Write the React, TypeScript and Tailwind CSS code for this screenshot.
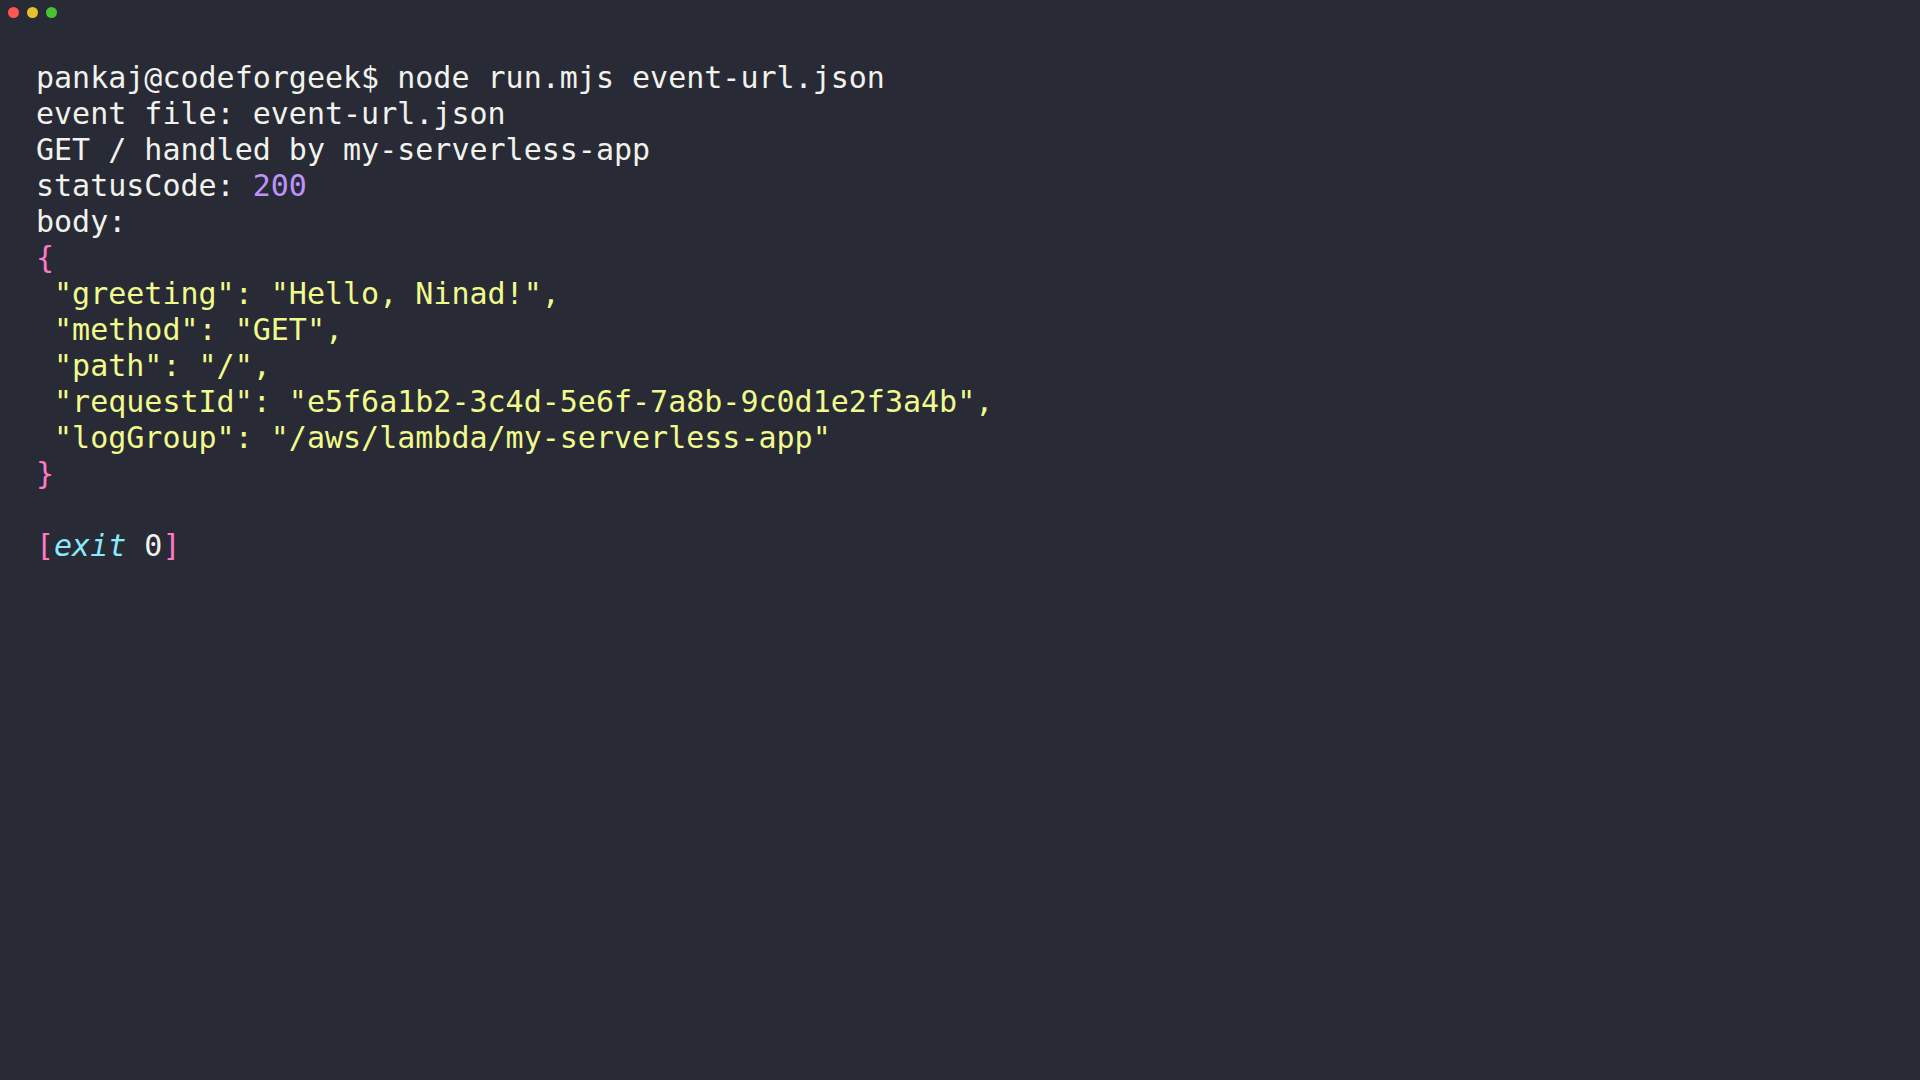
export default function App() {
  const yellow = "text-[#f1fa8c]";
  return (
    <div className="min-h-screen w-full bg-[#282a36] text-[#f2f2ec]">
      <div className="flex items-center gap-2 px-[8px] pt-[7px]">
        <span className="h-[11px] w-[11px] rounded-full bg-[#ff5555]" />
        <span className="h-[11px] w-[11px] rounded-full bg-[#e9c02c]" />
        <span className="h-[11px] w-[11px] rounded-full bg-[#4cc232]" />
      </div>
      <pre
        className="pl-[36px] pt-[42px] text-[30px] leading-[36px]"
        style={{ fontFamily: '"DejaVu Sans Mono", "Liberation Mono", monospace' }}
      >
        <div>pankaj@codeforgeek$ node run.mjs event-url.json</div>
        <div>event file: event-url.json</div>
        <div>GET / handled by my-serverless-app</div>
        <div>
          statusCode: <span className="text-[#bd93f9]">200</span>
        </div>
        <div>body:</div>
        <div className="text-[#ff79c6]">{"{"}</div>
        <div className={yellow}>{' "greeting": "Hello, Ninad!",'}</div>
        <div className={yellow}>{' "method": "GET",'}</div>
        <div className={yellow}>{' "path": "/",'}</div>
        <div className={yellow}>{' "requestId": "e5f6a1b2-3c4d-5e6f-7a8b-9c0d1e2f3a4b",'}</div>
        <div className={yellow}>{' "logGroup": "/aws/lambda/my-serverless-app"'}</div>
        <div className="text-[#ff79c6]">{"}"}</div>
        <div>&nbsp;</div>
        <div>
          <span className="text-[#ff79c6]">[</span>
          <span className="italic text-[#8be9fd]">exit</span> 0
          <span className="text-[#ff79c6]">]</span>
        </div>
      </pre>
    </div>
  );
}
